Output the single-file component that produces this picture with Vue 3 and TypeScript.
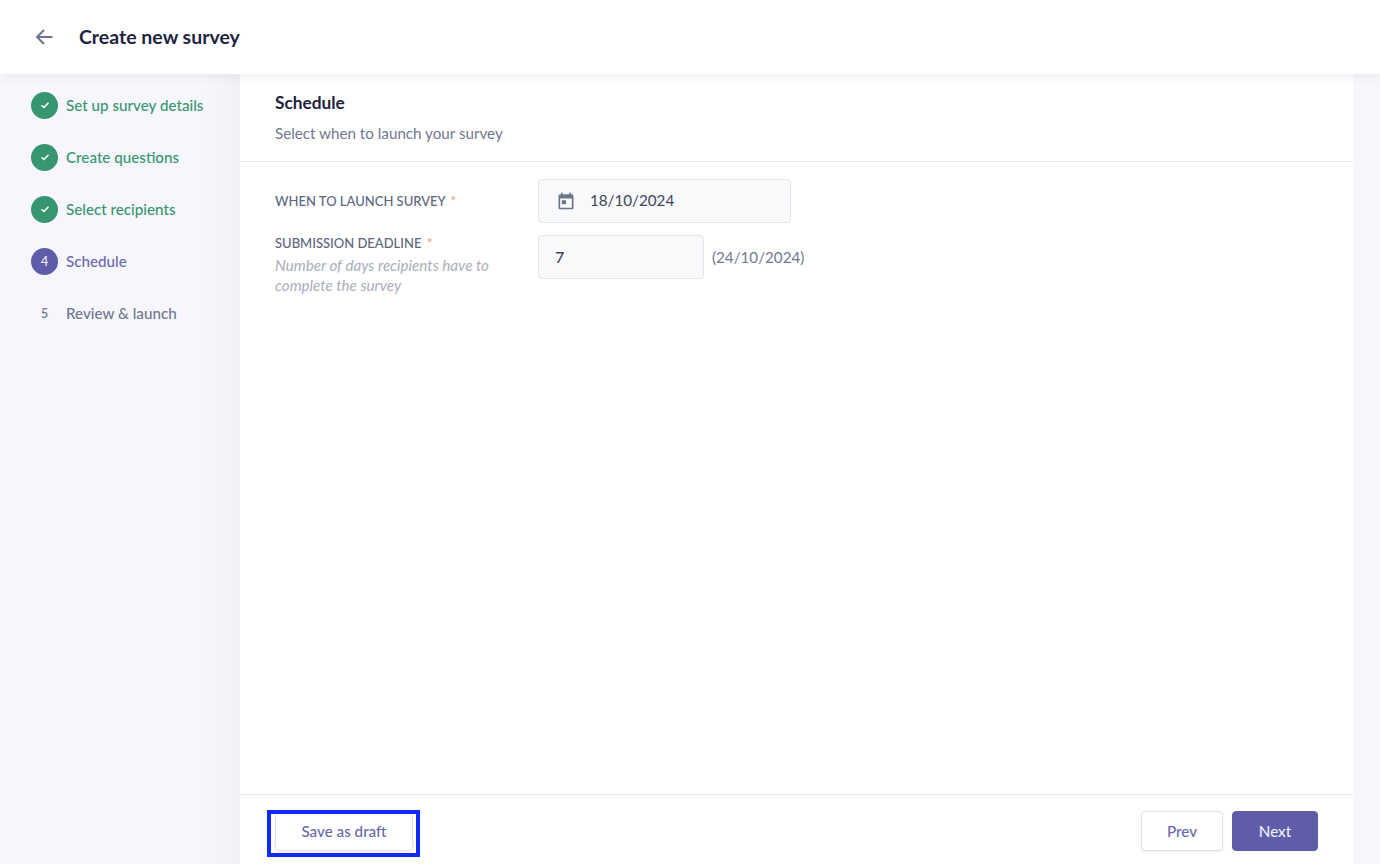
<script setup lang="ts">
interface Step {
  label: string;
  state: 'done' | 'active' | 'todo';
  n: number;
}
const steps: Step[] = [
  { label: 'Set up survey details', state: 'done', n: 1 },
  { label: 'Create questions', state: 'done', n: 2 },
  { label: 'Select recipients', state: 'done', n: 3 },
  { label: 'Schedule', state: 'active', n: 4 },
  { label: 'Review & launch', state: 'todo', n: 5 },
];
</script>

<template>
  <div class="page">
    <header class="topbar">
      <svg class="back" width="24" height="24" viewBox="0 0 24 24" fill="none">
        <path d="M20.5 12H5.5M12 5L5 12L12 19" stroke="#6b7590" stroke-width="2" />
      </svg>
      <h1>Create new survey</h1>
    </header>
    <div class="body">
      <aside class="sidebar">
        <div v-for="s in steps" :key="s.n" class="step" :class="s.state">
          <span class="dot">
            <svg v-if="s.state === 'done'" width="12" height="12" viewBox="0 0 12 12" fill="none">
              <path d="M2.5 6.2L5 8.5L9.5 3.8" stroke="#fff" stroke-width="1.4" />
            </svg>
            <template v-else>{{ s.n }}</template>
          </span>
          <span class="label">{{ s.label }}</span>
        </div>
      </aside>
      <main class="main">
        <section class="head">
          <h2>Schedule</h2>
          <p>Select when to launch your survey</p>
        </section>
        <section class="form">
          <div class="row first">
            <div class="lab">
              <div class="name">WHEN TO LAUNCH SURVEY <span class="req">*</span></div>
            </div>
            <div class="field date">
              <svg width="20" height="20" viewBox="0 0 24 24" fill="#6b7590">
                <path d="M19 4h-1V2h-2v2H8V2H6v2H5a2 2 0 0 0-2 2v14a2 2 0 0 0 2 2h14a2 2 0 0 0 2-2V6a2 2 0 0 0-2-2zm0 16H5V9h14v11zM7 11h5v5H7z" />
              </svg>
              <span>18/10/2024</span>
            </div>
          </div>
          <div class="row second">
            <div class="lab">
              <div class="name">SUBMISSION DEADLINE <span class="req">*</span></div>
              <div class="hint">Number of days recipients have to complete the survey</div>
            </div>
            <div class="field num"><span>7</span></div>
            <span class="computed">(24/10/2024)</span>
          </div>
        </section>
        <footer class="foot">
          <div class="draftwrap">
            <button class="btn draft">Save as draft</button>
            <span class="highlight"></span>
          </div>
          <div class="right">
            <button class="btn prev">Prev</button>
            <button class="btn next">Next</button>
          </div>
        </footer>
      </main>
    </div>
  </div>
</template>

<style>
html, body { margin: 0; background: #f6f6fb; }
</style>

<style scoped>
.page {
  width: 1380px;
  height: 864px;
  display: flex;
  flex-direction: column;
  overflow: hidden;
  font-family: Lato, "Liberation Sans", sans-serif;
  background: #f6f6fb;
}
.topbar {
  height: 74px;
  flex: none;
  background: #fff;
  display: flex;
  align-items: center;
  padding-left: 32px;
  gap: 23px;
  box-shadow: 0 2px 10px rgba(30, 30, 60, 0.07);
  position: relative;
  z-index: 2;
}
.back { flex: none; }
h1 {
  margin: 0;
  font-size: 19.5px;
  font-weight: 700;
  color: #22243f;
  position: relative;
  top: -1px;
}
.body { flex: 1; display: flex; min-height: 0; }
.sidebar {
  width: 240px;
  flex: none;
  padding: 5px 0 0 31px;
  box-sizing: border-box;
  background: linear-gradient(90deg, #f6f6fc 85%, #f0f0f6 100%);
}
.step {
  height: 52px;
  display: flex;
  align-items: center;
  gap: 8px;
  font-size: 15.2px;
  font-weight: 500;
}
.dot {
  width: 27px;
  height: 27px;
  border-radius: 50%;
  display: flex;
  align-items: center;
  justify-content: center;
  font-size: 13px;
  font-weight: 500;
  flex: none;
}
.done .dot { background: #37966f; }
.done .label { color: #37966f; }
.active .dot { background: #5f5daa; color: #e9e9f6; }
.active .label { color: #6a68ad; }
.todo .dot { color: #70788f; }
.todo .label { color: #70788f; }
.main {
  width: 1113px;
  flex: none;
  background: #fff;
  display: flex;
  flex-direction: column;
}
.head {
  height: 88px;
  flex: none;
  box-sizing: border-box;
  padding: 19px 35px 0;
  border-bottom: 1px solid #e5e6ea;
}
h2 {
  margin: 0;
  font-size: 17.3px;
  line-height: 20px;
  font-weight: 700;
  color: #22243f;
}
.head p {
  margin: 10px 0 0;
  font-size: 15.2px;
  line-height: 20px;
  color: #70788f;
}
.form { flex: 1; padding: 17px 0 0 35px; }
.row { display: flex; }
.first { height: 44px; align-items: center; }
.second { margin-top: 12px; }
.lab { width: 263px; flex: none; }
.name {
  font-size: 13px;
  line-height: 16px;
  font-weight: 500;
  color: #5c6580;
}
.req { color: #f0a070; margin-left: 2px; }
.hint {
  margin-top: 4px;
  width: 230px;
  font-size: 15.2px;
  line-height: 20px;
  font-style: italic;
  color: #a9aebb;
}
.field {
  height: 44px;
  box-sizing: border-box;
  background: #f8f9fb;
  border: 1px solid #e3e5ea;
  border-radius: 4px;
  display: flex;
  align-items: center;
  font-size: 15.2px;
  line-height: 20px;
  color: #3e4459;
}
.date { width: 253px; padding-left: 17px; gap: 14px; }
.date span { position: relative; top: -1px; }
.num { width: 166px; padding-left: 16px; font-size: 16px; font-weight: 500; }
.computed {
  margin-left: 8px;
  height: 44px;
  line-height: 44px;
  font-size: 15.2px;
  color: #70788f;
}
.foot {
  height: 70px;
  flex: none;
  box-sizing: border-box;
  border-top: 1px solid #e5e6ea;
  padding: 16px 35px 0;
  display: flex;
  justify-content: space-between;
  align-items: flex-start;
}
.right { display: flex; gap: 9px; }
.btn {
  height: 40px;
  box-sizing: border-box;
  border-radius: 4px;
  font-family: inherit;
  font-size: 15.2px;
  font-weight: 500;
  padding: 0;
  cursor: pointer;
}
.draft, .prev {
  background: #fff;
  border: 1px solid #e3e4ea;
  color: #6a68ad;
  box-shadow: 0 1px 2px rgba(30, 30, 60, 0.08);
}
.draft { width: 138px; }
.prev { width: 82px; }
.next {
  width: 86px;
  background: #5f5daa;
  border: 1px solid #5f5daa;
  color: #eeeef8;
}
.draftwrap { position: relative; }
.highlight {
  position: absolute;
  left: -8px;
  top: -1px;
  width: 153px;
  height: 47px;
  box-sizing: border-box;
  border: 4px solid #0f2bf5;
  pointer-events: none;
}
</style>
